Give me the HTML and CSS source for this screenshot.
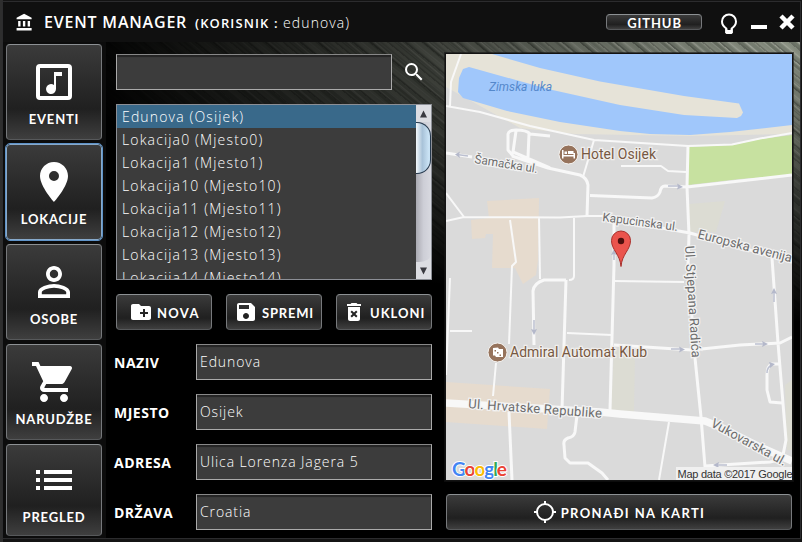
FILE: index.html
```html
<!DOCTYPE html>
<html lang="hr">
<head>
<meta charset="utf-8">
<title>Event Manager</title>
<link rel="stylesheet" href="styles.css">
</head>
<body>
<div class="window">
  <header class="titlebar">
    <svg class="bank" viewBox="0 0 24 24"><path d="M4 10v7h3v-7H4zm6 0v7h3v-7h-3zM2 22h19v-3H2v3zm14-12v7h3v-7h-3zm-4.500-9L2 6v2h19V6l-9.500-5z"/></svg>
    <h1 class="title">EVENT MANAGER</h1>
    <span class="user"><b>(KORISNIK :</b> <span class="user-name">edunova)</span></span>
    <button class="btn github">GITHUB</button>
    <svg class="bulb" viewBox="0 0 18 22"><path class="line" d="M6.300 15.500C3.500 13.500 2 11.500 2 8.500a7 7 0 0 1 14 0c0 3-1.500 5-4.300 7V19H6.300z"/><path d="M5.300 15.500h7.400V20l-1 1H6.300l-1-1z"/><path class="hole" d="M7.500 14h3v3h-3z"/></svg>
    <svg class="minimize" viewBox="0 0 16 16"><path d="M0 11h16v4H0z"/></svg>
    <svg class="close" viewBox="0 0 16 16"><path class="line" d="M2 2l12 12M14 2L2 14"/></svg>
  </header>
  <main class="body">
    <nav class="sidebar">
      <button class="btn tab"><svg viewBox="0 0 24 24"><path fill-rule="evenodd" d="M5 3h14a2 2 0 0 1 2 2v14a2 2 0 0 1-2 2H5a2 2 0 0 1-2-2V5a2 2 0 0 1 2-2zm0 2v14h14V5zM12 7h4v2h-3v6.500a2.500 2.500 0 1 1-1-2z"/></svg><span>EVENTI</span></button>
      <button class="btn tab active"><svg viewBox="0 0 24 24"><path d="M12 2C8.130 2 5 5.130 5 9c0 5.250 7 13 7 13s7-7.750 7-13c0-3.870-3.130-7-7-7zm0 9.500a2.500 2.500 0 1 1 0-5 2.500 2.500 0 0 1 0 5z"/></svg><span>LOKACIJE</span></button>
      <button class="btn tab"><svg viewBox="0 0 24 24"><path d="M12 5.900c1.160 0 2.100.94 2.100 2.100s-.94 2.100-2.100 2.100S9.900 9.160 9.900 8s.94-2.100 2.100-2.100m0 9c2.970 0 6.100 1.460 6.100 2.100v1.100H5.900V17c0-.64 3.130-2.100 6.100-2.100M12 4C9.790 4 8 5.790 8 8s1.790 4 4 4 4-1.790 4-4-1.790-4-4-4zm0 9c-2.670 0-8 1.340-8 4v3h16v-3c0-2.660-5.330-4-8-4z"/></svg><span>OSOBE</span></button>
      <button class="btn tab"><svg viewBox="0 0 24 24"><path d="M7 18c-1.100 0-1.990.9-1.990 2S5.900 22 7 22s2-.9 2-2-.9-2-2-2zM1 2v2h2l3.600 7.590-1.350 2.450c-.16.28-.25.61-.25.96 0 1.100.9 2 2 2h12v-2H7.420c-.14 0-.25-.11-.25-.25l.03-.12.9-1.630h7.450c.75 0 1.410-.41 1.750-1.030l3.580-6.490A1 1 0 0 0 20 4H5.210l-.94-2H1zm16 16c-1.100 0-1.990.9-1.990 2s.89 2 1.990 2 2-.9 2-2-.9-2-2-2z"/></svg><span>NARUDŽBE</span></button>
      <button class="btn tab last"><svg viewBox="0 0 24 24"><path d="M3 13h2v-2H3v2zm0 4h2v-2H3v2zm0-8h2V7H3v2zm4 4h14v-2H7v2zm0 4h14v-2H7v2zM7 7v2h14V7H7z"/></svg><span>PREGLED</span></button>
    </nav>

    <section class="editor">
      <div class="search">
        <div class="field"></div>
        <svg viewBox="0 0 24 24"><path d="M15.500 14h-.79l-.28-.27A6.470 6.470 0 0 0 16 9.500 6.500 6.500 0 1 0 9.500 16c1.610 0 3.090-.59 4.230-1.570l.27.28v.79l5 4.990L20.490 19l-4.990-5zm-6 0C7.010 14 5 11.990 5 9.500S7.010 5 9.500 5 14 7.010 14 9.500 11.990 14 9.500 14z"/></svg>
      </div>
      <div class="listbox">
        <ul class="rows">
          <li class="selected">Edunova (Osijek)</li>
          <li>Lokacija0 (Mjesto0)</li>
          <li>Lokacija1 (Mjesto1)</li>
          <li>Lokacija10 (Mjesto10)</li>
          <li>Lokacija11 (Mjesto11)</li>
          <li>Lokacija12 (Mjesto12)</li>
          <li>Lokacija13 (Mjesto13)</li>
          <li>Lokacija14 (Mjesto14)</li>
        </ul>
        <div class="scrollbar">
          <svg class="arrow" viewBox="0 0 15 17"><path d="M7.500 5.500l3.500 7H4z"/></svg>
          <div class="track"><div class="thumb"></div></div>
          <svg class="arrow" viewBox="0 0 15 17"><path d="M7.500 12.500L4 5.500h7z"/></svg>
        </div>
      </div>
      <div class="actions">
        <button class="btn nova"><svg viewBox="0 0 24 24"><path d="M20 6h-8l-2-2H4c-1.110 0-1.990.89-1.990 2L2 18c0 1.110.89 2 2 2h16c1.110 0 2-.89 2-2V8c0-1.110-.89-2-2-2zm-1 8h-3v3h-2v-3h-3v-2h3V9h2v3h3v2z"/></svg><span>NOVA</span></button>
        <button class="btn spremi"><svg viewBox="0 0 24 24"><path d="M17 3H5c-1.110 0-2 .9-2 2v14c0 1.100.89 2 2 2h14c1.100 0 2-.9 2-2V7l-4-4zm-5 16c-1.660 0-3-1.340-3-3s1.340-3 3-3 3 1.340 3 3-1.340 3-3 3zm3-10H5V5h10v4z"/></svg><span>SPREMI</span></button>
        <button class="btn ukloni"><svg viewBox="0 0 24 24"><path d="M6 19c0 1.100.9 2 2 2h8c1.100 0 2-.9 2-2V7H6v12zm2.460-7.120l1.410-1.410L12 12.590l2.120-2.120 1.410 1.410L13.410 14l2.120 2.120-1.410 1.410L12 15.410l-2.120 2.120-1.410-1.410L10.590 14l-2.130-2.120zM15.500 4l-1-1h-5l-1 1H5v2h14V4z"/></svg><span>UKLONI</span></button>
      </div>
      <div class="form">
        <label>NAZIV</label><div class="field">Edunova</div>
        <label>MJESTO</label><div class="field">Osijek</div>
        <label>ADRESA</label><div class="field">Ulica Lorenza Jagera 5</div>
        <label>DRŽAVA</label><div class="field">Croatia</div>
      </div>
    </section>

    <section class="location">
      <svg class="map" viewBox="446 54 346 426">
        <rect class="ground" x="446" y="54" width="346" height="426"/>
        <path class="sand" d="M446 54H792V134L690 136 575 134 520 128 446 87z"/>
        <path class="water" d="M492 54L540 68 600 81.500 684 96 739 103.500 741 108 743 112.500 741 116 737 118 684 115 620 105 548 89 469 67 463 69 459 78 458 92 463 98 507 111 560 122 620 131 650 134 690 135 730 132 792 125V54z"/>
        <path class="green" d="M689 147L733 145 760 139 792 135V175L740 179 688 185z"/>
        <path class="pale" d="M689 204L725 201 716 232 689 232zM614 349L635 352 634 412 611 411zM785 385L792 380V450L787 450z"/>
        <path class="block" d="M487 201L539 198 538 260 536 275 523 284 515 268 492 268 493 234 486 234 485 238 472 239 471 220 489 218zM446 382L550 389 547 429 446 422z"/>
        <g class="roads">
          <path d="M446 106L480 112 530 126 594 140 688 146 732 144.500 760 138.500 792 133M461 54L451 82 450 106M594 140L583 177M621 166H661L668 171 686 172M446 221L464 217 560 217.500 587 216H605M446 193L464 217M539 218L540 279M574 218V276Q574 280 569 280M510 220L516 262 512 266 509 344M496 363L493 396M567 333L612 335M614 281L684 282M669 422L659 480M450 278L446 375M450 331H472"/>
        </g>
        <g class="roads mid">
          <path d="M446 153L472 157M512 156L548 168 580 175Q587 178 588 185L587 216M513 156L508 150V134Q509 130 516 130Q527 130 530 134L550 136M516 131L513 152 550 168M529 134L528 157M590 195.500L652 198Q658 197 660 192Q661 186 665 186L687 187 792 175M566 280H544Q534 283 533 291L534 345M566 280L562 410M614 216V265L610 410M509 412L512 480M577 415L575 432Q574 437 568 438Q563 440 564 445L565 458 570 463 588 463 602 473 608 480M614 345L692 350 740 345 780 343 792 337M772 258L778 343 786 440 783 455Q779 461 770 462L705 466M780 364H772Q767 366 767 375V390L770 402 782 403M688 146L687 187 689 235 688 265 695 358 701 417 705 467M605 218L690 233 792 262"/>
          <path class="main" d="M446 403L600 412 620 414 705 421 720 427 760 447 792 461"/>
        </g>
        <g class="arrows">
          <path d="M468 156L457 154.500M668 186H680M671 349H682M755 344H766M534 320V333M774 302V290M727 465H715M614 260V251M767 373Q767 367 772 365"/>
          <path class="head" d="M455 154.500l5-3-1 3 1 3.500zM683 187l-6-3.500 1 3-1 3zM685 349.500l-6-3 1 3-1 3zM768 344l-6-3 1 3-1 3zM534 335l-3-6 3 1 3-1zM774 288l-3 6 3-1 3 1zM713 465l6-3-1 3 1 3zM614 249l-3 6 3-1 3 1zM775 364l-6-2 1 3 0 3z"/>
        </g>
        <g class="streets">
          <text transform="translate(474 163) rotate(9)" font-size="12" textLength="64">Šamačka ul.</text>
          <text transform="translate(602 221) rotate(7.500)" font-size="12" textLength="76">Kapucinska ul.</text>
          <text transform="translate(697 238) rotate(14.500)" font-size="13" textLength="97">Europska avenija</text>
          <text transform="translate(685 246) rotate(86.500)" font-size="13" textLength="112">Ul. Stjepana Radića</text>
          <text transform="translate(468 408) rotate(4.200)" font-size="13" textLength="134">Ul. Hrvatske Republike</text>
          <text transform="translate(710 426) rotate(28.500)" font-size="13" textLength="84">Vukovarska ul.</text>
        </g>
        <text class="sea" x="489" y="90.500" font-size="12" textLength="63">Zimska luka</text>
        <g class="places">
          <text x="581" y="159" textLength="75">Hotel Osijek</text>
          <text x="510" y="357" textLength="137">Admiral Automat Klub</text>
          <circle cx="568.500" cy="154.500" r="9.500"/>
          <circle cx="497.500" cy="352.500" r="9.500"/>
        </g>
        <path class="glyph" d="M562 150h1.500v5h10v-2h1.500v5.500h-1.500v-2h-10v2H562zM564.500 151.500h2.500v2.500h-2.500zM568 151h5.500v3H568z"/>
        <path class="glyph" d="M493 348l5-.500 1 1.500 4 0v8h-7l-1-1.500-2 0z"/>
        <path class="pips" d="M494.500 350h1.500v1.500h-1.500zM497 352h1.500v1.500H497zM499.500 354.500h1.500v1.500h-1.500z"/>
        <path class="pin" d="M621 266.500C620 254 611.500 250 611.500 240.500a9.500 9.500 0 0 1 19 0C630.500 250 622 254 621 266.500z"/>
        <circle class="pin-dot" cx="621" cy="241" r="3.200"/>
        <text class="google" x="452" y="476" textLength="55"><tspan class="b">G</tspan><tspan class="r">o</tspan><tspan class="y">o</tspan><tspan class="b">g</tspan><tspan class="g">l</tspan><tspan class="r">e</tspan></text>
        <rect class="credit-bg" x="676" y="467" width="116" height="13"/>
        <text class="credit" x="677.500" y="477.500" textLength="115">Map data ©2017 Google</text>
      </svg>
      <button class="btn locate"><svg viewBox="0 0 24 24"><circle class="line" cx="12" cy="12" r="8"/><path class="line" d="M12 1v4M12 19v4M1 12h4M19 12h4"/></svg><span>PRONAĐI NA KARTI</span></button>
    </section>
  </main>
</div>
</body>
</html>
```
FILE: styles.css
```css
* { box-sizing: border-box; }
body {
  margin: 0;
  width: 802px;
  height: 542px;
  overflow: hidden;
  padding: 1px 1px 3px 2px;
  background: linear-gradient(90deg, #2e2e2e 0 3px, #141414 3px);
  color: #fff;
  font-family: "Open Sans", "Noto Sans", sans-serif;
}
svg { display: block; fill: #fff; flex: none; }
.line { fill: none; stroke: #fff; stroke-width: 2; }

.window {
  width: 799px;
  height: 538px;
  border: 1px solid #2c2c2e;
  background: #000;
}
.titlebar {
  display: flex;
  align-items: center;
  height: 40px;
  padding-left: 12px;
  background: #101010;
}
.bank { width: 19px; height: 19px; }
.title {
  margin: 0 0 0 10px;
  width: 151px;
  font-size: 16px;
  font-weight: 600;
  letter-spacing: .8px;
  white-space: nowrap;
}
.user { font-size: 13px; letter-spacing: 1.1px; white-space: nowrap; }
.user b { font-weight: 600; }
.user-name { font-size: 14px; font-weight: 300; letter-spacing: 1.1px; }

.btn {
  display: flex;
  align-items: center;
  padding: 0;
  border: 1px solid #77797c;
  border-top-color: #8d9194;
  border-bottom-color: #57595b;
  border-radius: 4px;
  background: linear-gradient(#3b3b3b, #292929 45%, #202020 68%, #3f3f3f);
  color: #fff;
  font: 700 13px Lato, "Open Sans", sans-serif;
  letter-spacing: .8px;
  white-space: nowrap;
}
.github { width: 96px; height: 16px; margin-left: auto; justify-content: center; line-height: 14px; letter-spacing: .9px; padding: 1px 0 0 1px; }
.bulb { width: 18px; height: 22px; margin: 3px 0 0 18px; }
.bulb .hole { fill: #101010; }
.minimize { width: 16px; height: 16px; margin: 0 0 0 13px; }
.close { width: 16px; height: 16px; margin: 0 5px 0 12px; }
.close .line { stroke-width: 4.5; }

.body {
  display: grid;
  grid-template-columns: 96px 316px 348px;
  height: 496px;
  padding-left: 3px;
  column-gap: 13px;
  background:
    linear-gradient(90deg, #0c0c0c 0 103px, transparent 103px),
    radial-gradient(ellipse 720px 280px at 100% 0, transparent, rgba(0,0,0,.22) 25%, rgba(0,0,0,.62) 55%, #000 100%),
    repeating-linear-gradient(39deg, rgba(0,0,0,.2) 0 1px, transparent 2px 5px, rgba(255,255,255,.14) 6px, transparent 7px 11px),
    repeating-linear-gradient(40deg, #868d7f 0 2px, #6f7669 3px 5px, #a2a79a 7px, #7b8275 8px 11px, #949a8c 13px, #868d7f 17px);
}
.sidebar { display: flex; flex-direction: column; gap: 4px; padding-top: 2px; }
.tab { flex-direction: column; height: 96px; padding-top: 13px; }
.tab svg { width: 48px; height: 48px; }
.tab span { margin-top: 5px; line-height: 16px; }
.tab.last { height: 92px; padding-top: 11px; }
.active { outline: 1.5px solid #5f93c8; border-color: #87a9ca; }

.editor { display: flex; flex-direction: column; padding-top: 12px; margin-left: 1px; width: 316px; }
.search { display: flex; align-items: center; gap: 10px; }
.search .field { width: 276px; }
.search svg { width: 24px; height: 24px; }
.field {
  height: 36px;
  padding-left: 3px;
  border: 1px solid #aaa;
  border-top-color: #888;
  background: #3c3c3c;
  box-shadow: inset 0 2px 1px #242424;
  font-size: 14px;
  font-weight: 300;
  line-height: 33px;
  letter-spacing: .9px;
}
.listbox {
  display: grid;
  grid-template-columns: 1fr 15px;
  height: 176px;
  margin-top: 14px;
  border: 1px solid #8c8f96;
  background: #3c3c3c;
  overflow: hidden;
}
.rows { height: 174px; margin: 0; padding: 0; overflow: hidden; list-style: none; }
.rows li { height: 23px; padding-left: 5px; font-size: 14px; font-weight: 300; line-height: 23px; letter-spacing: 1.15px; }
.rows .selected { background: #39698a; }
.scrollbar { display: flex; flex-direction: column; height: 174px; background: #dcdde2; }
.arrow { width: 15px; height: 17px; fill: #3a3a40; }
.track { flex: 1; background: linear-gradient(90deg, #aaaab2, #cdced6 50%, #d8d9e0); overflow: hidden; border-bottom-right-radius: 12px 8px; }
.thumb { height: 52px; border: 1px solid #26394d; border-left: 0; border-radius: 0 14px 14px 0; background: linear-gradient(90deg, #f4f8fb, #a8c2d8 45%, #c9e2f4 90%); }

.actions { display: grid; grid-template-columns: repeat(3, 96px); gap: 14px; margin-top: 14px; }
.actions .btn { height: 36px; }
.actions svg { width: 24px; height: 24px; }
.actions span { line-height: 18px; padding-top: 2px; }
.nova { padding-left: 12px; gap: 4px; letter-spacing: 1.3px; }
.spremi { padding-left: 7px; gap: 4px; }
.ukloni { padding-left: 5px; gap: 4px; letter-spacing: 1px; }
.form {
  display: grid;
  grid-template-columns: 82px 236px;
  row-gap: 14px;
  margin: 14px 0 0 -2px;
}
.form label { font-size: 14px; font-weight: 700; line-height: 37px; height: 36px; letter-spacing: .5px; }

.location { padding-top: 11px; margin-left: 1px; }
.map { width: 348px; height: 428px; border: 1px solid #131313; outline: 1px solid rgba(20,20,20,.6); outline-offset: 0; }
.locate { width: 346px; height: 36px; margin: 13px 0 0 1px; justify-content: center; gap: 4px; letter-spacing: 1.4px; }
.locate svg { width: 24px; height: 24px; }
.locate span { padding-top: 2px; }

.ground { fill: #dadada; }
.sand { fill: #e6e3d8; }
.water { fill: #a0c7fb; }
.green { fill: #c7e1a0; }
.pale { fill: #dcdcd3; }
.block { fill: #e6dbce; }
.roads { fill: none; stroke: #f8f8f8; stroke-width: 2; stroke-linejoin: round; }
.roads.mid { stroke-width: 3; }
.roads .main { stroke-width: 7.5; }
.arrows { fill: none; stroke: #bcc0d0; stroke-width: 1.5; }
.arrows .head { fill: #b4b8ca; stroke: none; }
.map text { font-family: Roboto, sans-serif; }
.streets text { fill: #6c6c6c; stroke: #f2f2f2; stroke-width: 2.5; paint-order: stroke; }
.map .sea { fill: #5488cb; font-style: italic; }
.places text { font-size: 14px; fill: #775842; stroke: #f0eeec; stroke-width: 2.5; paint-order: stroke; }
.places circle { fill: #96735c; stroke: #f5f3f0; stroke-width: 1; }
.glyph { fill: #fff; }
.pips { fill: #96735c; }
.pin { fill: #ea544d; stroke: #a92f2b; stroke-width: 1; }
.pin-dot { fill: #4c0f0d; }
.map .google { font: 700 19px Lato, sans-serif; stroke: #fff; stroke-width: 2; paint-order: stroke; }
.b { fill: #4285f4; }
.r { fill: #ea4335; }
.y { fill: #fbbc05; }
.g { fill: #34a853; }
.credit-bg { fill: #f0f0f0; }
.map .credit { font: 11px "Liberation Sans", sans-serif; fill: #333; }
```
